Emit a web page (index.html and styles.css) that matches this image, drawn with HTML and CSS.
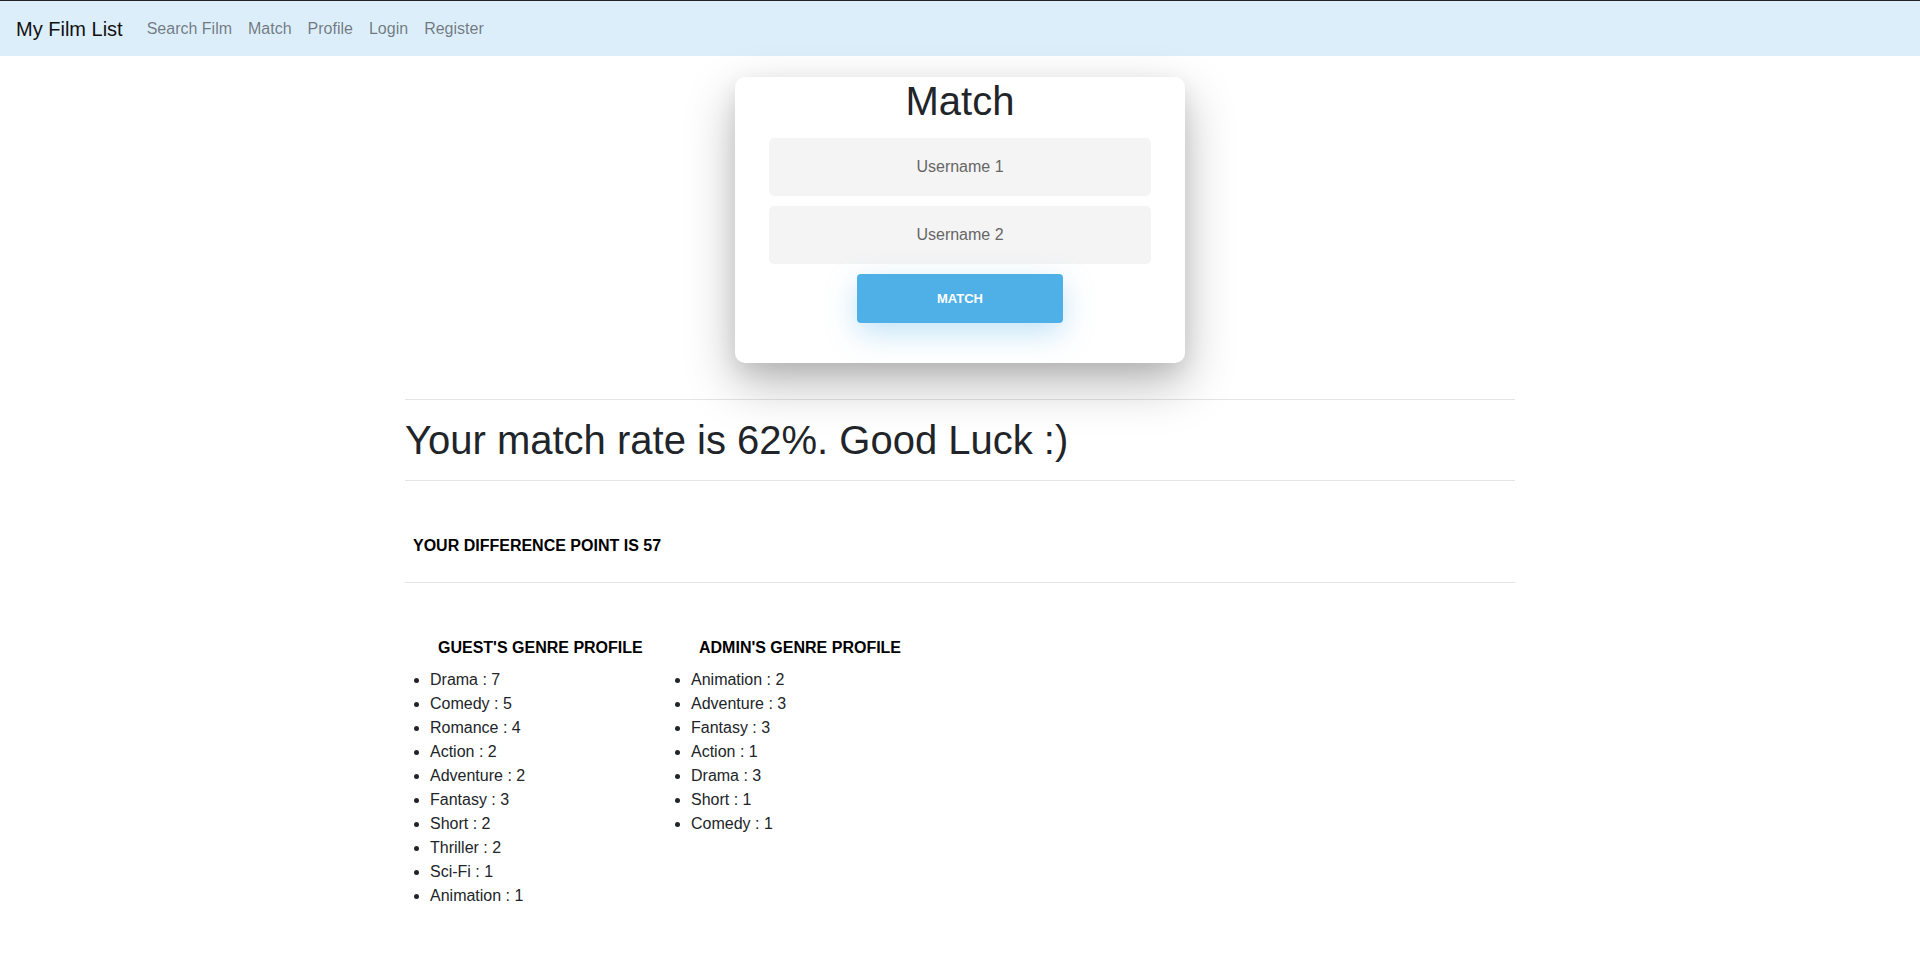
FILE: index.html
```html
<!DOCTYPE html>
<html lang="en">
<head>
<meta charset="utf-8">
<title>My Film List - Match</title>
<link rel="stylesheet" href="styles.css">
</head>
<body>
<nav class="navbar">
  <a class="brand" href="#">My Film List</a>
  <ul class="nav">
    <li><a href="#">Search Film</a></li>
    <li><a href="#">Match</a></li>
    <li><a href="#">Profile</a></li>
    <li><a href="#">Login</a></li>
    <li><a href="#">Register</a></li>
  </ul>
</nav>
<main class="page">
  <section class="match-card">
    <h1 class="card-title">Match</h1>
    <input class="field" type="text" placeholder="Username 1">
    <input class="field" type="text" placeholder="Username 2">
    <button class="btn-match" type="button">MATCH</button>
  </section>
  <div class="container">
    <hr class="rule">
    <h1 class="rate">Your match rate is 62%. Good Luck :)</h1>
    <hr class="rule">
    <div class="diff">Your difference point is 57</div>
    <hr class="rule">
    <div class="genres">
      <div class="genre-col first">
        <h2 class="genre-title">Guest's genre profile</h2>
        <ul class="genre-list">
          <li>Drama : 7</li>
          <li>Comedy : 5</li>
          <li>Romance : 4</li>
          <li>Action : 2</li>
          <li>Adventure : 2</li>
          <li>Fantasy : 3</li>
          <li>Short : 2</li>
          <li>Thriller : 2</li>
          <li>Sci-Fi : 1</li>
          <li>Animation : 1</li>
        </ul>
      </div>
      <div class="genre-col">
        <h2 class="genre-title">Admin's genre profile</h2>
        <ul class="genre-list">
          <li>Animation : 2</li>
          <li>Adventure : 3</li>
          <li>Fantasy : 3</li>
          <li>Action : 1</li>
          <li>Drama : 3</li>
          <li>Short : 1</li>
          <li>Comedy : 1</li>
        </ul>
      </div>
    </div>
  </div>
</main>
</body>
</html>
```
FILE: styles.css
```css
html, body {
  margin: 0;
  padding: 0;
}
body {
  font-family: "Liberation Sans", Arial, Helvetica, sans-serif;
  font-size: 16px;
  line-height: 1.5;
  color: #212529;
  background: #fff;
}

/* Navbar */
.navbar {
  display: flex;
  align-items: center;
  height: 56px;
  box-sizing: border-box;
  padding: 0 16px;
  background: #ddeefb;
  border-top: 1px solid #222;
}
.brand {
  font-size: 20px;
  line-height: 30px;
  color: #111;
  text-decoration: none;
  margin-right: 16px;
}
.nav {
  display: flex;
  list-style: none;
  margin: 0;
  padding: 0;
}
.nav a {
  display: block;
  padding: 8px;
  color: rgba(0, 0, 0, 0.5);
  text-decoration: none;
  line-height: 24px;
}

/* Match card */
.match-card {
  width: 450px;
  box-sizing: border-box;
  margin: 21px auto 0;
  padding: 0 34px 40px;
  background: #fff;
  border-radius: 10px;
  box-shadow: 0 20px 50px rgba(0, 0, 0, 0.28), 0 8px 20px rgba(0, 0, 0, 0.08);
  display: flex;
  flex-direction: column;
  align-items: center;
}
.card-title {
  margin: 0 0 13px;
  font-size: 40px;
  line-height: 48px;
  font-weight: 400;
  color: #212529;
}
.field {
  display: block;
  width: 100%;
  height: 58px;
  box-sizing: border-box;
  border: none;
  border-radius: 5px;
  background: #f4f4f4;
  font-family: "Liberation Sans", Arial, Helvetica, sans-serif;
  font-size: 16px;
  text-align: center;
  color: #212529;
  margin: 0 0 10px;
  padding: 0 12px;
  outline: none;
}
.field::placeholder {
  color: #666;
  opacity: 1;
}
.btn-match {
  width: 206px;
  height: 49px;
  border: none;
  border-radius: 4px;
  background: #4fb0e8;
  color: #fff;
  font-family: "Liberation Sans", Arial, Helvetica, sans-serif;
  font-size: 13px;
  font-weight: bold;
  box-shadow: 0 10px 30px rgba(79, 176, 232, 0.35);
}

/* Result area */
.container {
  width: 1110px;
  margin: 36px auto 0;
  padding-bottom: 40px;
}
.rule {
  margin: 0;
  height: 0;
  border: 0;
  border-top: 1px solid rgba(0, 0, 0, 0.1);
}
.rate {
  margin: 16px 0;
  font-size: 40px;
  line-height: 48px;
  font-weight: 400;
  color: #212529;
}
.diff {
  padding: 53px 8px 24px;
  font-weight: bold;
  text-transform: uppercase;
  color: #000;
  line-height: 24px;
}
.genres {
  display: flex;
  align-items: flex-start;
  padding-top: 53px;
}
.genre-col {
  width: 261px;
}
.genre-title {
  margin: 0 0 8px 33px;
  font-size: 16px;
  line-height: 24px;
  font-weight: bold;
  text-transform: uppercase;
  color: #000;
  white-space: nowrap;
}
.genre-list {
  margin: 0;
  padding-left: 25px;
  line-height: 24px;
}
```
